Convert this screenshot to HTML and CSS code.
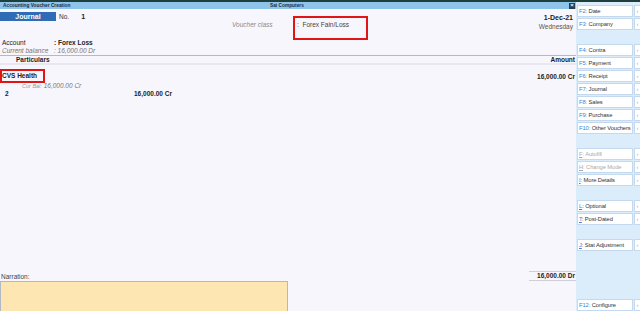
FILE: index.html
```html
<!DOCTYPE html>
<html lang="en">
<head>
    <meta charset="UTF-8">
    <title>Accounting Voucher Creation</title>
    <link rel="stylesheet" href="styles.css">
</head>
<body>
    <div class="topline"></div>
    <div class="screen">
        <div class="main">
            <div class="titlebar">
                <span class="title">Accounting Voucher Creation</span>
                <span class="company">Sai Computers</span>
                <span class="close">×</span>
            </div>

            <div class="vhead">
                <div class="vtype">
                    <span class="vname">Journal</span>
                    <span class="vno-label">No.</span>
                    <span class="vno">1</span>
                </div>
                <div class="vclass">
                    <span class="vclass-label">Voucher class</span>
                    <span class="vclass-value">:&nbsp; Forex Fain/Loss</span>
                </div>
                <div class="vdate">
                    <div class="date">1-Dec-21</div>
                    <div class="day">Wednesday</div>
                </div>
            </div>

            <div class="account">
                <div class="arow"><span class="alabel">Account</span><span class="aval strong">: Forex Loss</span></div>
                <div class="arow muted"><span class="alabel">Current balance</span><span class="aval">: 16,000.00 Dr</span></div>
            </div>

            <div class="thead">
                <span class="th-part">Particulars</span>
                <span class="th-amt">Amount</span>
            </div>

            <div class="entry">
                <span class="ledger">CVS Health</span>
                <span class="amt">16,000.00 Cr</span>
            </div>
            <div class="curbal"><span class="cb-label">Cur Bal:</span> 16,000.00 Cr</div>
            <div class="billrow">
                <span class="billno">2</span>
                <span class="billamt">16,000.00 Cr</span>
            </div>

            <div class="spacer"></div>

            <div class="foot">
                <span class="narr-label">Narration:</span>
                <span class="total">16,000.00 Dr</span>
            </div>
            <div class="narration"></div>
        </div>

        <div class="sidebar">
            <div class="btn"><span class="lbl"><span class="k">F2:</span> Date</span><span class="arr">‹</span></div>
            <div class="btn"><span class="lbl"><span class="k">F3:</span> Company</span><span class="arr">‹</span></div>
            <div class="gap"></div>
            <div class="btn"><span class="lbl"><span class="k">F4:</span> Contra</span><span class="arr">‹</span></div>
            <div class="btn"><span class="lbl"><span class="k">F5:</span> Payment</span><span class="arr">‹</span></div>
            <div class="btn"><span class="lbl"><span class="k">F6:</span> Receipt</span><span class="arr">‹</span></div>
            <div class="btn"><span class="lbl"><span class="k">F7:</span> Journal</span><span class="arr">‹</span></div>
            <div class="btn"><span class="lbl"><span class="k">F8:</span> Sales</span><span class="arr">‹</span></div>
            <div class="btn"><span class="lbl"><span class="k">F9:</span> Purchase</span><span class="arr">‹</span></div>
            <div class="btn"><span class="lbl"><span class="k">F10:</span> Other Vouchers</span><span class="arr">‹</span></div>
            <div class="gap"></div>
            <div class="btn off"><span class="lbl"><span class="u">F</span>: Autofill</span><span class="arr">‹</span></div>
            <div class="btn off"><span class="lbl"><span class="u">H</span>: Change Mode</span><span class="arr">‹</span></div>
            <div class="btn"><span class="lbl"><span class="k u">I</span>: More Details</span><span class="arr">‹</span></div>
            <div class="gap"></div>
            <div class="btn"><span class="lbl"><span class="k u">L</span>: Optional</span><span class="arr">‹</span></div>
            <div class="btn"><span class="lbl"><span class="k u">T</span>: Post-Dated</span><span class="arr">‹</span></div>
            <div class="gap"></div>
            <div class="btn"><span class="lbl"><span class="k u">J</span>: Stat Adjustment</span><span class="arr">‹</span></div>
            <div class="btn last"><span class="lbl"><span class="k">F12:</span> Configure</span><span class="arr">‹</span></div>
        </div>
    </div>
</body>
</html>
```

FILE: styles.css
```css
html, body {
    margin: 0;
    height: 100%;
    overflow: hidden;
}
body {
    font-family: "Liberation Sans", Arial, sans-serif;
    font-size: 6.5px;
    color: #222;
    background-color: #f8f6fd;
}
.topline {
    height: 2px;
    background-color: #1f3f3c;
}
.screen {
    display: flex;
    height: 309px;
}
.main {
    flex: 1;
    display: flex;
    flex-direction: column;
    min-width: 0;
}
.titlebar {
    height: 7px;
    flex: none;
    background-color: #8fc4ea;
    display: flex;
    align-items: center;
    font-size: 4.8px;
    font-weight: bold;
    color: #1d2d3d;
    padding-left: 3px;
}
.title {
    width: 267px;
}
.company {
    flex: 1;
}
.close {
    width: 6px;
    height: 6px;
    line-height: 5px;
    text-align: center;
    background-color: #2a3b4b;
    color: #fff;
    font-size: 6px;
    margin-right: 1px;
}
.vhead {
    display: flex;
    height: 30px;
    flex: none;
    padding-top: 3px;
    box-sizing: border-box;
}
.vtype {
    width: 232px;
    display: flex;
    align-items: flex-start;
}
.vname {
    width: 56px;
    height: 9px;
    line-height: 9px;
    background-color: #2f6cb5;
    color: #fff;
    font-weight: bold;
    font-size: 7px;
    text-align: center;
}
.vno-label {
    margin-left: 3px;
    line-height: 9px;
    color: #333;
}
.vno {
    margin-left: 12px;
    line-height: 9px;
    font-weight: bold;
    font-size: 7px;
}
.vclass {
    display: flex;
    align-items: flex-start;
    height: 24px;
    margin-top: 4px;
    position: relative;
    z-index: 1;
}
.vclass-label {
    width: 61px;
    padding-top: 2px;
    line-height: 14px;
    font-style: italic;
    color: #888;
}
.vclass-value {
    width: 69px;
    height: 20px;
    line-height: 14px;
    border: 2px solid #e01515;
    padding-left: 2px;
    color: #444;
}
.vdate {
    flex: 1;
    text-align: right;
    padding-right: 3px;
    padding-top: 1px;
    line-height: 9px;
}
.date {
    font-weight: bold;
    font-size: 7px;
}
.day {
    color: #555;
}
.account {
    padding-left: 2px;
    height: 16px;
    flex: none;
}
.arow {
    display: flex;
    line-height: 8px;
}
.alabel {
    width: 52px;
}
.muted {
    font-style: italic;
    color: #777;
}
.strong {
    font-weight: bold;
    color: #222;
}
.thead {
    display: flex;
    justify-content: space-between;
    border-top: 1px solid #b8b8c0;
    border-bottom: 2px solid #e8e6ee;
    height: 7px;
    line-height: 7px;
    font-weight: bold;
    padding: 0 1px 0 16px;
    flex: none;
}
.entry {
    display: flex;
    justify-content: space-between;
    margin-top: 4px;
    height: 14px;
    align-items: center;
    padding-right: 1px;
    flex: none;
}
.ledger {
    width: 41px;
    height: 10px;
    line-height: 10px;
    border: 2px solid #e01515;
    font-weight: bold;
}
.amt {
    font-weight: bold;
}
.curbal {
    margin-top: -1px;
    padding-left: 22px;
    font-style: italic;
    color: #777;
    line-height: 7px;
}
.cb-label {
    color: #999;
    font-size: 5.5px;
}
.billrow {
    display: flex;
    line-height: 7px;
    font-weight: bold;
}
.billno {
    width: 129px;
    padding-left: 5px;
}
.spacer {
    flex: 1;
}
.foot {
    display: flex;
    justify-content: space-between;
    align-items: center;
    height: 10px;
    flex: none;
}
.narr-label {
    padding-left: 1px;
    color: #444;
}
.total {
    width: 46px;
    text-align: right;
    padding-right: 1px;
    border-top: 1px solid #cfcfd6;
    border-bottom: 1px solid #cfcfd6;
    font-weight: bold;
    line-height: 8px;
}
.narration {
    width: 286px;
    height: 29px;
    background-color: #fde6b2;
    border: 1px solid #b4b8c4;
    border-bottom: none;
    flex: none;
}
.sidebar {
    width: 64px;
    flex: none;
    background-color: #dbedfa;
    display: flex;
    flex-direction: column;
    gap: 1px;
    padding-top: 3px;
    box-sizing: border-box;
}
.btn {
    display: flex;
    height: 12px;
    margin-left: 1px;
    font-size: 5.8px;
    line-height: 10px;
    white-space: nowrap;
    flex: none;
}
.lbl {
    flex: 1;
    background-color: #fff;
    border: 1px solid #c4d8ee;
    padding-left: 1px;
    color: #333;
    overflow: hidden;
    letter-spacing: -0.1px;
}
.arr {
    width: 5px;
    margin-left: 1px;
    background-color: #fff;
    border: 1px solid #c4d8ee;
    border-right: none;
    color: #aab;
    text-align: center;
}
.gap {
    height: 12px;
    flex: none;
}
.k {
    color: #3c82d2;
}
.u {
    text-decoration: underline;
}
.off .lbl {
    color: #aaa;
}
.last {
    margin-top: auto;
}
```
